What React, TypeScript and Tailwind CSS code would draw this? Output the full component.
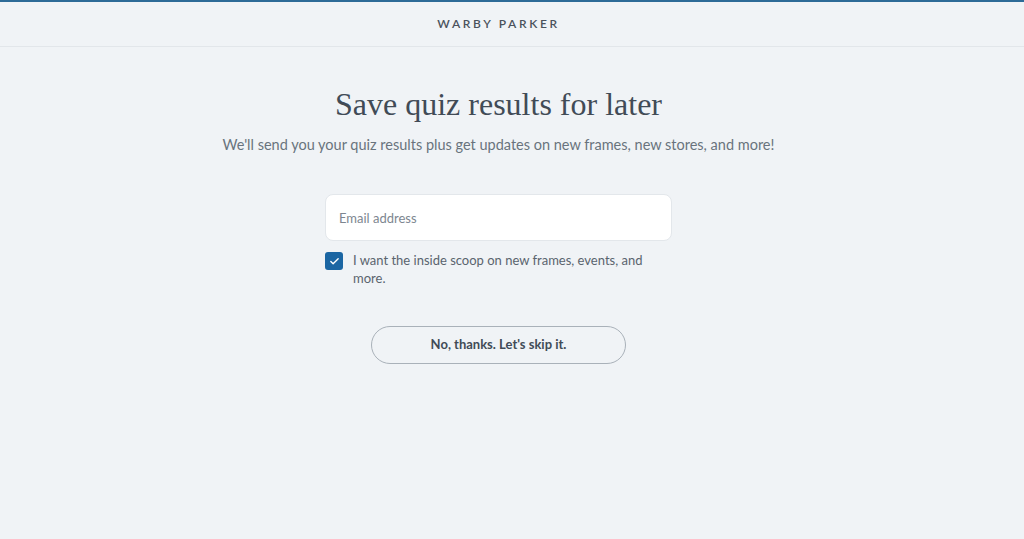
import { Check } from "lucide-react";

export default function App() {
  return (
    <div className="min-h-[539px] w-full bg-[#f0f3f6] font-['Lato',sans-serif] text-[#414b56]">
      <header className="h-[47px] w-full border-t-2 border-b border-t-[#2d6b97] border-b-[#e2e6ea] flex items-center justify-center pr-[27px]">
        <span className="text-[12px] font-semibold tracking-[0.22em] text-[#4a525c]">WARBY PARKER</span>
      </header>

      <main className="flex flex-col items-center pr-[27px]">
        <h1 className="mt-[38px] font-['Liberation_Serif',serif] text-[32px] leading-[38px] text-[#414b56]">
          Save quiz results for later
        </h1>
        <p className="mt-[12px] text-[14.5px] leading-[20px] text-[#69737d]">
          We'll send you your quiz results plus get updates on new frames, new stores, and more!
        </p>

        <form className="mt-[39px] flex w-[347px] flex-col">
          <input
            type="email"
            placeholder="Email address"
            className="h-[47px] w-full rounded-[8px] border border-[#e3e7eb] bg-white px-[13px] text-[13px] text-[#414b56] outline-none placeholder:text-[#7d8690]"
          />
          <label className="mt-[10px] flex items-start gap-[10px]">
            <span className="mt-[1px] flex h-[18px] w-[18px] shrink-0 items-center justify-center rounded-[3px] bg-[#1b66a3]">
              <Check className="h-[11px] w-[11px] text-white" strokeWidth={3} />
            </span>
            <span className="pr-[4px] text-[13px] leading-[18px] text-[#5a646e]">
              I want the inside scoop on new frames, events, and more.
            </span>
          </label>

          <button
            type="button"
            className="mx-auto mt-[39px] h-[38px] w-[255px] rounded-full border border-[#a9b1b9] text-[13px] font-bold text-[#414b56]"
          >
            No, thanks. Let's skip it.
          </button>
        </form>
      </main>
    </div>
  );
}
